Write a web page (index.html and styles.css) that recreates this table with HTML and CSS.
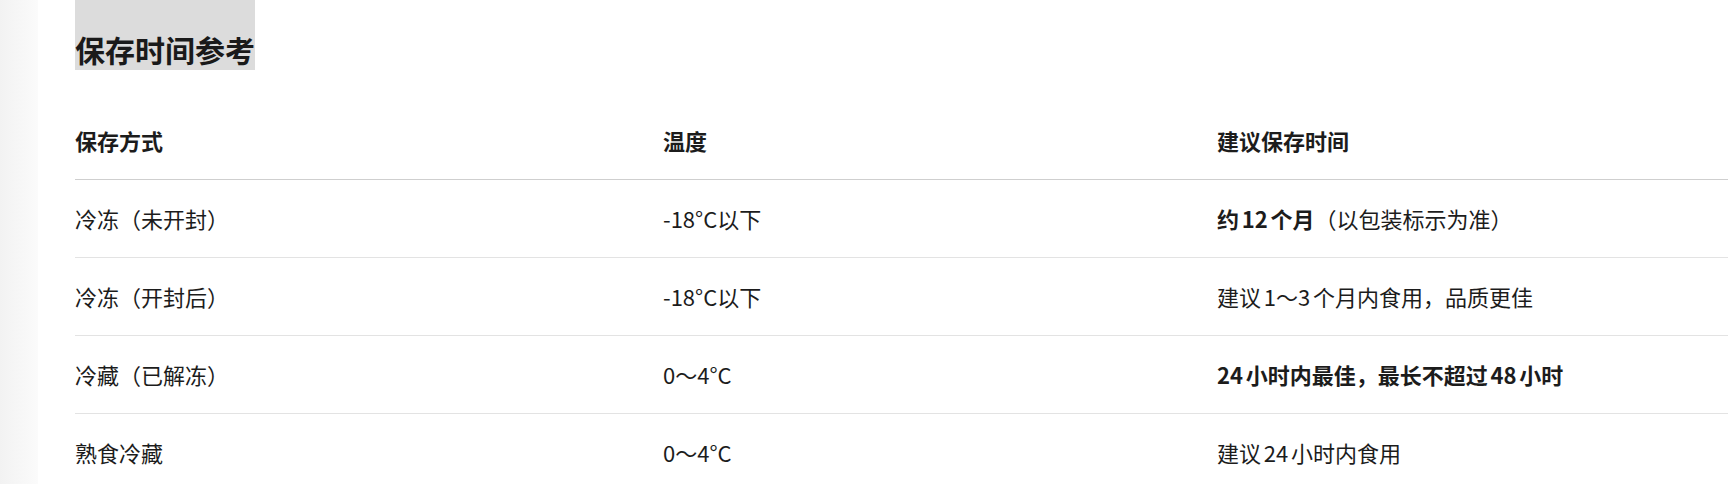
FILE: index.html
```html
<!DOCTYPE html>
<html lang="zh-CN">
<head>
<meta charset="utf-8">
<title>保存时间参考</title>
<link rel="stylesheet" href="styles.css">
</head>
<body>
<div class="page">
  <aside class="rail"></aside>
  <main class="content">
    <h2 class="title">保存时间参考</h2>
    <table class="storage">
      <thead>
        <tr>
          <th class="c-method">保存方式</th>
          <th class="c-temp">温度</th>
          <th class="c-time">建议保存时间</th>
        </tr>
      </thead>
      <tbody>
        <tr>
          <td>冷冻（未开封）</td>
          <td class="temp">-18°C以下</td>
          <td><strong>约12个月</strong>（以包装标示为准）</td>
        </tr>
        <tr>
          <td>冷冻（开封后）</td>
          <td class="temp">-18°C以下</td>
          <td>建议1～3个月内食用，品质更佳</td>
        </tr>
        <tr>
          <td>冷藏（已解冻）</td>
          <td class="temp">0～4°C</td>
          <td><strong>24小时内最佳，最长不超过48小时</strong></td>
        </tr>
        <tr>
          <td>熟食冷藏</td>
          <td class="temp">0～4°C</td>
          <td>建议24小时内食用</td>
        </tr>
      </tbody>
    </table>
  </main>
</div>
</body>
</html>
```
FILE: styles.css
```css
html, body {
  margin: 0;
  padding: 0;
  background: #ffffff;
}

body {
  font-family: "Noto Sans CJK SC", "Noto Sans", sans-serif;
  color: #1c1c1c;
  text-autospace: normal;
}

.page {
  display: flex;
  min-height: 484px;
  overflow: hidden;
}

.rail {
  flex: none;
  width: 38px;
  background: linear-gradient(to right, #f2f2f2, #fbfbfb);
}

.content {
  flex: 1;
  min-width: 0;
  padding-left: 37px;
}

.title {
  margin: 0;
  width: fit-content;
  padding-top: 28px;
  font-size: 30px;
  line-height: 42px;
  font-weight: 700;
  color: #1a1a1a;
  background: #dcdcdc;
}

.storage {
  width: 100%;
  margin-top: 32px;
  border-collapse: collapse;
  table-layout: fixed;
  font-size: 22px;
}

.storage th,
.storage td {
  padding: 22px 0;
  line-height: 33px;
  text-align: left;
  vertical-align: middle;
  white-space: nowrap;
}

.storage th {
  font-weight: 700;
  border-bottom: 1px solid #cfcfcf;
}

.storage td {
  font-weight: 400;
  border-bottom: 1px solid #e3e3e3;
}

.storage td.temp {
  text-autospace: no-autospace;
}

.storage strong {
  font-weight: 700;
}

.c-method {
  width: 588px;
}

.c-temp {
  width: 554px;
}
```
